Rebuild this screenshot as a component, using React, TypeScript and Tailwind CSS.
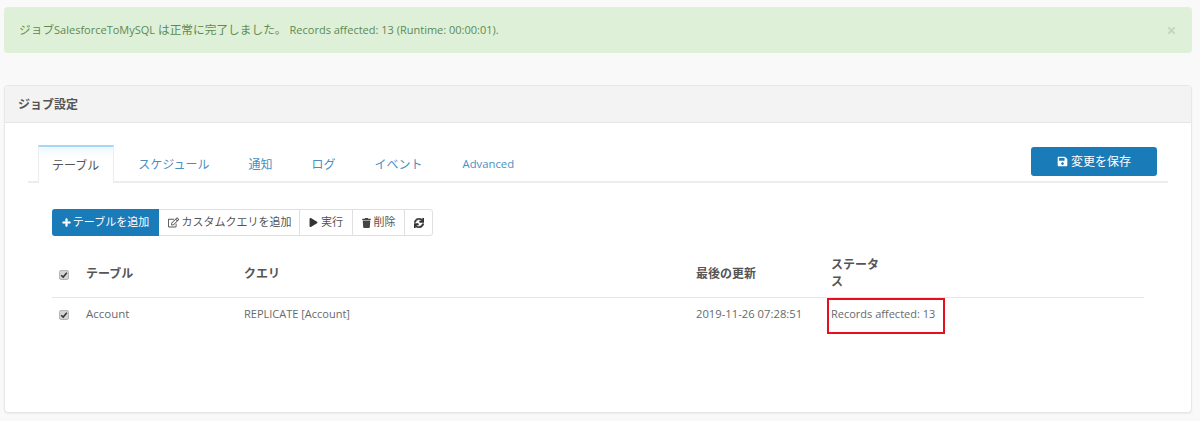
import { FaPlus, FaRegEdit, FaPlay, FaTrash, FaSync, FaSave, FaTimes } from 'react-icons/fa';

const FONT = "font-['Open_Sans','Noto_Sans_CJK_JP',sans-serif]";

function Check() {
    return (
        <span className="inline-flex items-center justify-center w-[10px] h-[10px] rounded-[2px] bg-[#d4d4d4] border border-[#b5b5b5] align-middle">
            <svg viewBox="0 0 10 10" className="w-[8px] h-[8px]">
                <path d="M1.5 5.2 L4 7.6 L8.5 2.2" fill="none" stroke="#333" strokeWidth="1.8" />
            </svg>
        </span>
    );
}

const tabs = ['スケジュール', '通知', 'ログ', 'イベント'];

export default function App() {
    return (
        <div className={`${FONT} w-[1200px] h-[421px] overflow-hidden bg-[#f9f9f9] pt-[7px] pl-[4px] pr-[8px] text-[12px] text-[#676a6c]`}>
            {/* alert */}
            <div className="h-[46px] bg-[#dff0d8] rounded-[4px] pl-[15px] pr-[15px] flex items-center justify-between text-[#5d8a52]">
                <span className="whitespace-pre text-[11.7px]">
                    ジョブ<span className="text-[11px]">SalesforceToMySQL </span>は正常に完了しました。 <span className="text-[11px]">Records affected: 13 (Runtime: 00:00:01).</span>
                </span>
                <FaTimes className="w-[11px] h-[11px] text-[#c2d8bc]" />
            </div>

            {/* panel */}
            <div className="mt-[32px] h-[328px] bg-white rounded-[4px] border border-[#e7e7e7] shadow-[0_1px_2px_rgba(0,0,0,0.06)]">
                <div className="h-[37px] pt-[2px] bg-[#f3f3f3] border-b border-[#e5e5e5] rounded-t-[4px] pl-[13px] flex items-center font-bold text-[#555]">
                    ジョブ設定
                </div>
                <div className="pt-[22px] pl-[23px] pr-[23px]">
                    {/* tabs */}
                    <div className="h-[38px] border-b-2 border-[#ececec] pl-[10px] flex items-start">
                        <div className="h-[38px] pt-[2px] pl-[13px] pr-[14px] flex items-center bg-gradient-to-b from-[#eef8fe] to-white to-30% border-t-2 border-t-[#a5d8f7] border-x border-x-[#ececec] text-[#555] mr-[10px]">
                            テーブル
                        </div>
                        {tabs.map((t) => (
                            <div key={t} className="h-[37px] pt-[2px] px-[14px] mr-[11px] flex items-center text-[#4a8fc2]">
                                {t}
                            </div>
                        ))}
                        <div className="h-[37px] pt-[2px] pl-[15px] pr-[14px] flex items-center text-[#4a8fc2] text-[11.3px]">
                            Advanced
                        </div>
                        <button className="ml-auto mr-[11px] mt-[2px] w-[126px] h-[29px] rounded-[3px] bg-[#1a7bb9] text-white flex items-center justify-center gap-[3px]">
                            <FaSave className="w-[11px] h-[11px]" />
                            変更を保存
                        </button>
                    </div>

                    {/* toolbar */}
                    <div className="mt-[26px] ml-[24px] inline-flex h-[27px] border border-[#e0e0e0] rounded-[3px] text-[#555] text-[11px]">
                        <button className="w-[107px] -my-px -ml-px bg-[#1a7bb9] text-white rounded-l-[3px] flex items-center justify-center gap-[2px]">
                            <FaPlus className="w-[9px] h-[9px] stroke-[30]" />
                            テーブルを追加
                        </button>
                        <button className="w-[141px] flex items-center justify-center gap-[3px] border-r border-[#e0e0e0]">
                            <FaRegEdit className="w-[11px] h-[11px] ml-[1px]" />
                            カスタムクエリを追加
                        </button>
                        <button className="w-[53px] flex items-center justify-center gap-[3px] border-r border-[#e0e0e0]">
                            <FaPlay className="w-[9px] h-[9px] text-[#333]" />
                            実行
                        </button>
                        <button className="w-[52px] flex items-center justify-center gap-[3px] border-r border-[#e0e0e0]">
                            <FaTrash className="w-[9px] h-[10px] text-[#444]" />
                            削除
                        </button>
                        <button className="w-[27px] flex items-center justify-center">
                            <FaSync className="w-[10px] h-[10px] text-[#333] stroke-[30]" />
                        </button>
                    </div>

                    {/* table */}
                    <table className="mt-[13px] ml-[24px] w-[1092px] table-fixed border-collapse text-left">
                        <colgroup>
                            <col className="w-[26px]" />
                            <col className="w-[158px]" />
                            <col className="w-[452px]" />
                            <col className="w-[135px]" />
                            <col className="w-[68px]" />
                            <col />
                        </colgroup>
                        <thead>
                            <tr className="h-[48px] border-b border-[#e7e7e7] text-[#555]">
                                <th className="pl-[7px] pt-[2px] font-normal"><Check /></th>
                                <th className="px-[8px] pt-[2px] font-bold">テーブル</th>
                                <th className="px-[8px] pt-[2px] font-bold">クエリ</th>
                                <th className="px-[8px] pt-[2px] font-bold">最後の更新</th>
                                <th className="px-[8px] font-bold leading-[17px]">ステータス</th>
                                <th />
                            </tr>
                        </thead>
                        <tbody>
                            <tr className="h-[36px] text-[11px]">
                                <td className="pl-[7px] pb-[2px]"><Check /></td>
                                <td className="px-[8px] pb-[3px] text-[11.5px]">Account</td>
                                <td className="px-[8px] pb-[2px]">REPLICATE [Account]</td>
                                <td className="px-[8px] pb-[2px] text-[11.25px]">2019-11-26 07:28:51</td>
                                <td colSpan={2} className="pl-[4px]">
                                    <div className="w-[118px] h-[36px] border-2 border-[#e60f1e] pl-[2px] pb-[2px] flex items-center whitespace-nowrap">
                                        Records affected: 13
                                    </div>
                                </td>
                            </tr>
                        </tbody>
                    </table>
                </div>
            </div>
        </div>
    );
}
